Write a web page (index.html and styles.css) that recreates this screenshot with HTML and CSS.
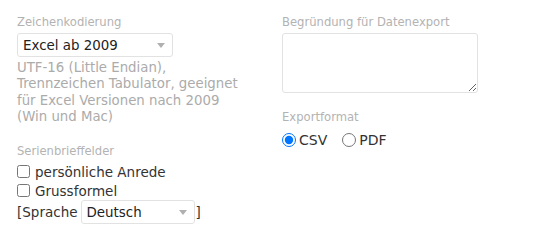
FILE: index.html
```html
<!DOCTYPE html>
<html lang="de">
<head>
  <meta charset="UTF-8">
  <meta name="viewport" content="width=device-width, initial-scale=1.0">
  <title>Datenexport</title>
  <link rel="stylesheet" href="styles.css">
</head>
<body>
  <div class="export-form">
    <div class="col">
      <div class="form-group">
        <label class="field-label" for="encoding">Zeichenkodierung</label>
        <span class="select-wrap encoding">
          <select id="encoding">
            <option>Excel ab 2009</option>
          </select>
        </span>
        <p class="hint">UTF-16 (Little Endian), Trennzeichen Tabulator, geeignet für Excel Versionen nach 2009 (Win und Mac)</p>
      </div>

      <div class="form-group mail-merge">
        <div class="field-label">Serienbrieffelder</div>
        <label class="check"><input type="checkbox">persönliche Anrede</label>
        <label class="check"><input type="checkbox">Grussformel</label>
        <div class="lang-row">
          [Sprache
          <span class="select-wrap lang">
            <select>
              <option>Deutsch</option>
            </select>
          </span>]
        </div>
      </div>
    </div>

    <div class="col">
      <div class="form-group">
        <label class="field-label" for="reason">Begründung für Datenexport</label>
        <textarea id="reason"></textarea>
      </div>

      <div class="form-group format">
        <div class="field-label">Exportformat</div>
        <div class="radio-row">
          <label class="radio"><input type="radio" name="format" checked>CSV</label>
          <label class="radio"><input type="radio" name="format">PDF</label>
        </div>
      </div>
    </div>
  </div>
</body>
</html>
```

FILE: styles.css
```css
body {
  margin: 0;
  font-family: "DejaVu Sans", Verdana, sans-serif;
  color: #333;
  background-color: #fff;
}

.export-form {
  display: grid;
  grid-template-columns: 265px 1fr;
  padding: 14px 17px 0;
}

.form-group {
  display: flex;
  flex-direction: column;
  align-items: flex-start;
}

.field-label {
  font-size: 11.6px;
  line-height: 16px;
  color: #b3b3b3;
  margin-bottom: 3px;
}

.select-wrap {
  position: relative;
  display: inline-block;
}

.select-wrap::after {
  content: "";
  position: absolute;
  top: 10px;
  right: 8px;
  border-left: 4px solid transparent;
  border-right: 4px solid transparent;
  border-top: 5px solid #b0b0b0;
  pointer-events: none;
}

select {
  appearance: none;
  -webkit-appearance: none;
  font-family: inherit;
  font-size: 13.4px;
  color: #222;
  background-color: #fff;
  border: 1px solid #e2e2e2;
  border-radius: 3px;
  height: 24px;
  padding: 0 20px 0 5px;
  margin: 0;
}

.encoding select {
  width: 156px;
}

.hint {
  margin: 3px 0 0;
  width: 228px;
  font-size: 13.3px;
  line-height: 16.3px;
  color: #ababab;
}

.mail-merge {
  margin-top: 18px;
}

.check {
  display: flex;
  align-items: center;
  height: 19px;
  font-size: 13.5px;
}

.check input {
  margin: 0 5px 0 0;
  width: 13px;
  height: 13px;
}

.lang-row {
  display: flex;
  align-items: center;
  gap: 3px;
  font-size: 13.5px;
  height: 24px;
}

.lang select {
  width: 114px;
}

.lang-row .select-wrap {
  margin-right: -2px;
}

textarea {
  width: 196px;
  height: 60px;
  box-sizing: border-box;
  border: 1px solid #e2e2e2;
  border-radius: 3px;
  margin: 0;
  padding: 4px;
  font-family: inherit;
}

.format {
  margin-top: 16px;
}

.radio-row {
  display: flex;
  align-items: center;
  gap: 15px;
  height: 24px;
}

.radio {
  display: flex;
  align-items: center;
  font-size: 14px;
}

.radio input {
  margin: 0 3px 0 0;
  width: 14px;
  height: 14px;
}
```
